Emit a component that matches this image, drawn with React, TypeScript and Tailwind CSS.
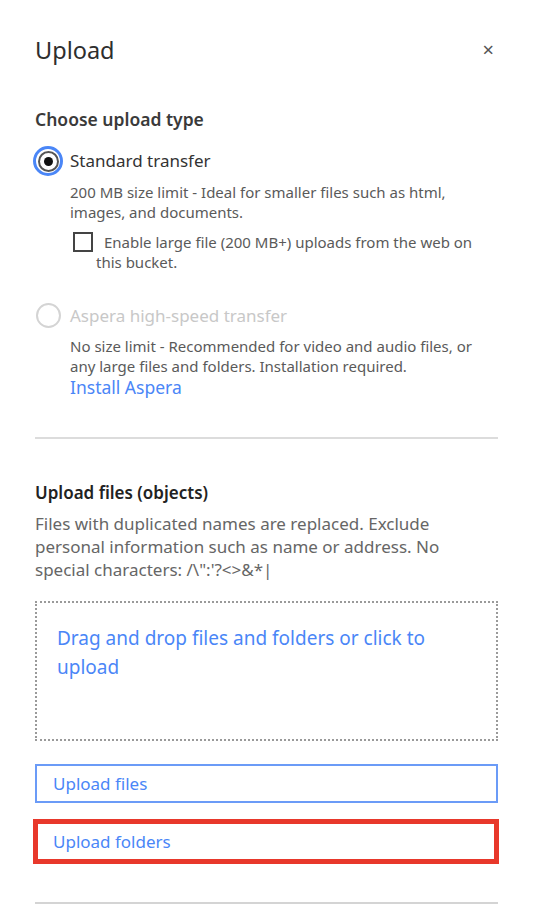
import React from "react";

export default function App() {
  return (
    <div
      className="w-[534px] h-[914px] bg-white overflow-hidden pl-[35px] pr-[36px]"
      style={{ fontFamily: '"Noto Sans", "Open Sans", sans-serif' }}
    >
      {/* Header */}
      <div className="pt-[34px] flex items-center justify-between h-[66px]">
        <h1 className="text-[23.5px] leading-[32px] text-[#2e2e2e] font-normal">Upload</h1>
        <span className="text-[20px] leading-[32px] text-[#555] pr-[4px]">×</span>
      </div>

      <div className="mt-[41px] text-[17.5px] leading-[24px] font-semibold text-[#3a3a3a]">
        Choose upload type
      </div>

      {/* Standard transfer */}
      <div className="mt-[15px] flex items-center h-[30px] -ml-[2px]">
        <div className="w-[30px] h-[30px] rounded-full border-[3px] border-[#4a86f7] flex items-center justify-center">
          <div className="w-[21px] h-[21px] rounded-full border-2 border-[#555] flex items-center justify-center">
            <div className="w-[9px] h-[9px] rounded-full bg-[#111]" />
          </div>
        </div>
        <span className="ml-[7px] text-[17px] text-[#333]">Standard transfer</span>
      </div>
      <div className="pl-[35px] mt-[6px] text-[15px] leading-[20px] text-[#5a5a5a]">
        200 MB size limit - Ideal for smaller files such as html,
        <br />
        images, and documents.
      </div>
      <div className="mt-[10px] pl-[61px] pr-[16px] text-[15px] leading-[20px] text-[#5a5a5a] -indent-[23px]">
        <span className="inline-block align-middle w-[20px] h-[20px] border-2 border-[#444] mr-[11px] -mt-[3px]" />
        Enable large file (200 MB+) uploads from the web on
        <br />
        this bucket.
      </div>

      {/* Aspera */}
      <div className="mt-[28px] flex items-center h-[30px]">
        <div className="w-[25px] h-[25px] rounded-full border-2 border-[#d4d4d4] ml-[1px]" />
        <span className="ml-[9px] text-[17px] text-[#c8c8c8]">Aspera high-speed transfer</span>
      </div>
      <div className="pl-[35px] mt-[6px] text-[15px] leading-[20px] text-[#5a5a5a]">
        No size limit - Recommended for video and audio files, or
        <br />
        any large files and folders. Installation required.
      </div>
      <div className="pl-[35px] text-[17.5px] leading-[22px] text-[#4a86f7]">Install Aspera</div>

      <div className="mt-[39px] h-[2px] bg-[#dcdcdc]" />

      {/* Upload files section */}
      <div className="mt-[42px] text-[17px] leading-[24px] font-semibold text-[#222]">
        Upload files (objects)
      </div>
      <div className="mt-[7px] text-[17px] leading-[23px] text-[#666]">
        Files with duplicated names are replaced. Exclude
        <br />
        personal information such as name or address. No
        <br />
        special characters: /\":'?&lt;&gt;&amp;*|
      </div>

      <div className="mt-[20px] h-[140px] border-2 border-dotted border-[#9a9a9a] pl-[20px] pt-[21px] pr-[40px]">
        <div className="text-[19px] leading-[29px] text-[#4a86f7]">
          Drag and drop files and folders or click to upload
        </div>
      </div>

      <div className="mt-[23px] h-[39px] border-2 border-[#6b9bf7] flex items-center pl-[16px]">
        <span className="text-[17px] text-[#4a86f7]">Upload files</span>
      </div>

      <div className="mt-[16px] -ml-[2px] -mr-[1px] h-[45px] border-[5px] border-[#e8382b] flex items-center pl-[15px]">
        <span className="text-[17px] text-[#4a86f7]">Upload folders</span>
      </div>

      <div className="mt-[38px] h-[2px] bg-[#d4d4d4]" />
    </div>
  );
}
